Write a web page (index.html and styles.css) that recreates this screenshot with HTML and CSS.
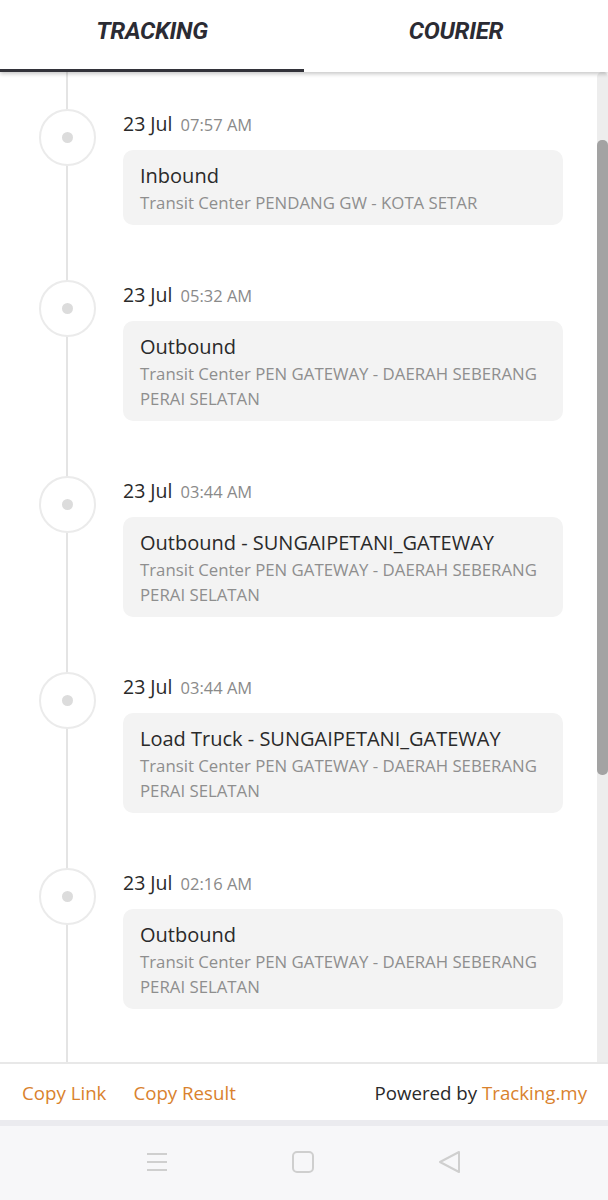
FILE: index.html
```html
<!DOCTYPE html>
<html lang="en">
  <head>
    <meta charset="UTF-8" />
    <meta name="viewport" content="width=device-width, initial-scale=1.0" />
    <title>Tracking</title>
    <link rel="stylesheet" href="styles.css">
  </head>
  <body>
    <div class="tabs">
      <div class="tab active">TRACKING</div>
      <div class="tab">COURIER</div>
    </div>

    <div class="main">
      <div class="timeline">
        <div class="entry">
          <div class="marker"><div class="circle"><span class="dot"></span></div></div>
          <div class="info">
            <div class="when">23 Jul <span class="time">07:57 AM</span></div>
            <div class="card">
              <div class="status">Inbound</div>
              <div class="place">Transit Center PENDANG GW - KOTA SETAR</div>
            </div>
          </div>
        </div>

        <div class="entry">
          <div class="marker"><div class="circle"><span class="dot"></span></div></div>
          <div class="info">
            <div class="when">23 Jul <span class="time">05:32 AM</span></div>
            <div class="card">
              <div class="status">Outbound</div>
              <div class="place">Transit Center PEN GATEWAY - DAERAH SEBERANG PERAI SELATAN</div>
            </div>
          </div>
        </div>

        <div class="entry">
          <div class="marker"><div class="circle"><span class="dot"></span></div></div>
          <div class="info">
            <div class="when">23 Jul <span class="time">03:44 AM</span></div>
            <div class="card">
              <div class="status">Outbound - SUNGAIPETANI_GATEWAY</div>
              <div class="place">Transit Center PEN GATEWAY - DAERAH SEBERANG PERAI SELATAN</div>
            </div>
          </div>
        </div>

        <div class="entry">
          <div class="marker"><div class="circle"><span class="dot"></span></div></div>
          <div class="info">
            <div class="when">23 Jul <span class="time">03:44 AM</span></div>
            <div class="card">
              <div class="status">Load Truck - SUNGAIPETANI_GATEWAY</div>
              <div class="place">Transit Center PEN GATEWAY - DAERAH SEBERANG PERAI SELATAN</div>
            </div>
          </div>
        </div>

        <div class="entry">
          <div class="marker"><div class="circle"><span class="dot"></span></div></div>
          <div class="info">
            <div class="when">23 Jul <span class="time">02:16 AM</span></div>
            <div class="card">
              <div class="status">Outbound</div>
              <div class="place">Transit Center PEN GATEWAY - DAERAH SEBERANG PERAI SELATAN</div>
            </div>
          </div>
        </div>
      </div>
      <div class="scrollbar"><div class="thumb"></div></div>
    </div>

    <div class="footer">
      <a href="#">Copy Link</a>
      <a href="#">Copy Result</a>
      <div class="powered">Powered by <a href="#">Tracking.my</a></div>
    </div>

    <div class="navbar">
      <svg width="22" height="20" viewBox="0 0 22 20">
        <path d="M1 2h20M1 10h20M1 18h20" stroke="#cfcfcf" stroke-width="2" fill="none" />
      </svg>
      <svg width="22" height="22" viewBox="0 0 22 22">
        <rect x="1" y="1" width="20" height="20" rx="4" stroke="#cfcfcf" stroke-width="2" fill="none" />
      </svg>
      <svg width="24" height="24" viewBox="0 0 24 24">
        <path d="M21 2L2 12l19 10z" stroke="#cfcfcf" stroke-width="2" stroke-linejoin="round" fill="none" />
      </svg>
    </div>
  </body>
</html>
```

FILE: styles.css
```css
* {
  margin: 0;
  padding: 0;
  box-sizing: border-box;
}
body {
  font-family: "Open Sans", Arial, sans-serif;
  width: 608px;
  height: 1200px;
  display: flex;
  flex-direction: column;
  background: #fff;
  color: #2a2a2a;
  overflow: hidden;
}

/* tabs on top */
.tabs {
  display: flex;
  height: 72px;
  flex-shrink: 0;
  position: relative;
  z-index: 2;
  background: #fff;
  box-shadow: 0 2px 4px rgba(0, 0, 0, 0.22);
}
.tab {
  flex: 1;
  text-align: center;
  font-family: "Roboto", sans-serif;
  font-style: italic;
  font-weight: 700;
  font-size: 24px;
  letter-spacing: -0.3px;
  color: #2b2b33;
  padding-top: 17px;
  border-bottom: 3px solid transparent;
}
.tab.active {
  border-bottom-color: #33333a;
}

.main {
  height: 990px;
  flex-shrink: 0;
  display: flex;
  overflow: hidden;
}
.timeline {
  flex: 1;
  padding-top: 38px;
  background: linear-gradient(#e4e4e4, #e4e4e4) 66px 0 / 2px 100% no-repeat;
}
.entry {
  display: flex;
  margin-bottom: 56px;
}
.marker {
  width: 123px;
  flex-shrink: 0;
}
.circle {
  width: 57px;
  height: 57px;
  margin: -1px 0 0 39px;
  border: 2px solid #ebebeb;
  border-radius: 50%;
  background: #fff;
  display: flex;
  align-items: center;
  justify-content: center;
}
.dot {
  width: 11px;
  height: 11px;
  border-radius: 50%;
  background: #dcdcdc;
}
.info {
  width: 440px;
}
.when {
  font-size: 19.5px;
  line-height: 28px;
  color: #2a2a2a;
  margin-bottom: 11px;
}
.time {
  font-size: 16.5px;
  color: #8a8a8a;
  margin-left: 3px;
}
.card {
  background: #f3f3f3;
  border-radius: 10px;
  padding: 12px 17px 10px;
}
.status {
  font-size: 20px;
  line-height: 27px;
  color: #2a2a2a;
}
.place {
  font-size: 16.8px;
  line-height: 25px;
  margin-top: 1px;
  color: #8e8e8e;
}

.scrollbar {
  width: 11px;
  background: #ededed;
  border-radius: 5px 5px 0 0;
  padding-top: 68px;
}
.thumb {
  height: 635px;
  background: #a3a3a3;
  border-radius: 5px;
}

.footer {
  height: 64px;
  flex-shrink: 0;
  border-top: 2px solid #e8e8e8;
  border-bottom: 6px solid #ebebef;
  display: flex;
  align-items: center;
  padding: 0 21px 0 22px;
  gap: 27px;
  font-size: 18.7px;
}
.footer a {
  color: #d9822e;
  text-decoration: none;
}
.powered {
  margin-left: auto;
  color: #2a2a2a;
}

.navbar {
  flex: 1;
  background: #f7f7f9;
  display: flex;
  justify-content: center;
  align-items: center;
  gap: 124px;
  padding-bottom: 2px;
}
```
